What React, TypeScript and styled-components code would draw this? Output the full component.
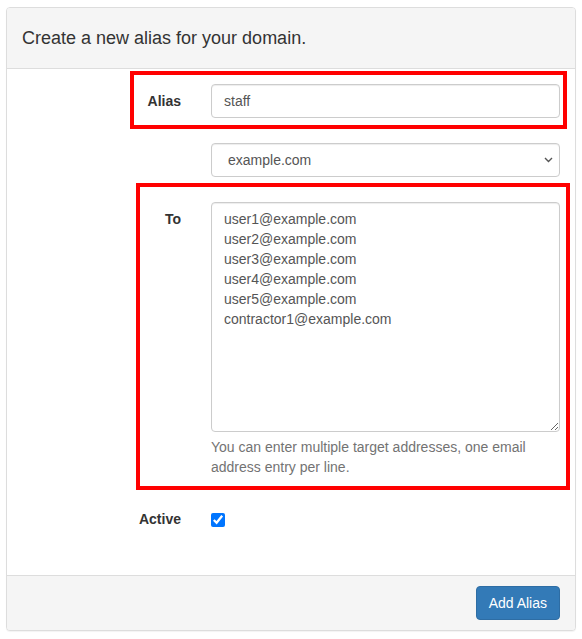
import React from "react";
import styled, { createGlobalStyle } from "styled-components";

const GlobalStyle = createGlobalStyle`
    html, body {
        margin: 0;
        padding: 0;
        background: #fff;
    }
    body {
        font-family: "Liberation Sans", Arial, Helvetica, sans-serif;
        font-size: 14px;
        line-height: 20px;
        color: #333;
    }
    * {
        box-sizing: border-box;
    }
`;

const Page = styled.div`
    padding: 7px 6px;
`;

const Panel = styled.div`
    border: 1px solid #ddd;
    border-radius: 4px;
    background: #fff;
    box-shadow: 0 1px 1px rgba(0, 0, 0, 0.05);
`;

const PanelHeading = styled.div`
    height: 61px;
    display: flex;
    align-items: center;
    padding: 0 15px;
    background: #f5f5f5;
    border-bottom: 1px solid #ddd;
    border-radius: 3px 3px 0 0;
`;

const Title = styled.h3`
    margin: 0;
    font-size: 18px;
    font-weight: 400;
    line-height: 20px;
    color: #333;
`;

const PanelBody = styled.div`
    display: flex;
    flex-direction: column;
    gap: 25px;
    padding: 15px 15px 39px;
`;

const FormGroup = styled.div`
    position: relative;
    display: grid;
    grid-template-columns: 159px 1fr;
    column-gap: 30px;
    align-items: start;
`;

const Label = styled.label`
    padding-top: 7px;
    text-align: right;
    font-weight: 700;
    line-height: 20px;
    color: #333;
`;

const Field = styled.div`
    position: relative;
    display: flex;
    flex-direction: column;
    min-width: 0;
`;

const TextInput = styled.input`
    width: 100%;
    height: 34px;
    padding: 6px 12px;
    font: inherit;
    color: #555;
    background: #fff;
    border: 1px solid #ccc;
    border-radius: 4px;
    box-shadow: inset 0 1px 1px rgba(0, 0, 0, 0.075);
    outline: none;
`;

const Select = styled.select`
    width: 100%;
    height: 34px;
    padding: 6px 12px 6px 16px;
    font: inherit;
    color: #555;
    background: #fff;
    border: 1px solid #ccc;
    border-radius: 4px;
    box-shadow: inset 0 1px 1px rgba(0, 0, 0, 0.075);
    outline: none;
    appearance: none;
    -webkit-appearance: none;
`;

const Chevron = styled.svg`
    position: absolute;
    top: 14px;
    right: 7px;
    width: 9px;
    height: 6px;
    pointer-events: none;
`;

const TextArea = styled.textarea`
    width: 100%;
    height: 230px;
    padding: 6px 12px;
    font: inherit;
    line-height: 20px;
    color: #555;
    background: #fff;
    border: 1px solid #ccc;
    border-radius: 4px;
    box-shadow: inset 0 1px 1px rgba(0, 0, 0, 0.075);
    outline: none;
    display: block;
`;

const HelpBlock = styled.span`
    display: block;
    margin-top: 5px;
    color: #737373;
    line-height: 20px;
`;

const CheckWrap = styled.div`
    padding-top: 11px;
    height: 34px;
`;

const Checkbox = styled.input`
    width: 14px;
    height: 14px;
    margin: 0;
    display: block;
    accent-color: #0075ff;
`;

const Highlight = styled.div<{ $top: number; $right: number; $bottom: number; $left: number }>`
    position: absolute;
    top: ${ p => p.$top }px;
    right: ${ p => p.$right }px;
    bottom: ${ p => p.$bottom }px;
    left: ${ p => p.$left }px;
    border: 4px solid #ff0000;
    pointer-events: none;
`;

const PanelFooter = styled.div`
    display: flex;
    justify-content: flex-end;
    padding: 10px 15px;
    background: #f5f5f5;
    border-top: 1px solid #ddd;
    border-radius: 0 0 3px 3px;
`;

const Button = styled.button`
    height: 34px;
    padding: 6px 12px;
    font: inherit;
    line-height: 20px;
    color: #fff;
    background: #337ab7;
    border: 1px solid #2e6da4;
    border-radius: 4px;
    cursor: pointer;
`;

const targets = [
    "user1@example.com",
    "user2@example.com",
    "user3@example.com",
    "user4@example.com",
    "user5@example.com",
    "contractor1@example.com",
];

const App: React.FC = () => {
    return <Page>
        <GlobalStyle/>
        <Panel>
            <PanelHeading>
                <Title>Create a new alias for your domain.</Title>
            </PanelHeading>
            <PanelBody>
                <FormGroup>
                    <Label htmlFor="alias">Alias</Label>
                    <Field>
                        <TextInput id="alias" type="text" defaultValue="staff"/>
                    </Field>
                    <Highlight $top={ -13 } $right={ -7 } $bottom={ -11 } $left={ 108 }/>
                </FormGroup>
                <FormGroup>
                    <span/>
                    <Field>
                        <Select defaultValue="example.com">
                            <option value="example.com">example.com</option>
                        </Select>
                        <Chevron viewBox="0 0 9 6">
                            <path d="M1 1 L4.5 4.5 L8 1" fill="none" stroke="#555" strokeWidth="1.4"/>
                        </Chevron>
                    </Field>
                </FormGroup>
                <FormGroup>
                    <Label htmlFor="to">To</Label>
                    <Field>
                        <TextArea id="to" defaultValue={ targets.join("\n") }/>
                        <HelpBlock>You can enter multiple target addresses, one email address entry per line.</HelpBlock>
                    </Field>
                    <Highlight $top={ -19 } $right={ -10 } $bottom={ -13 } $left={ 114 }/>
                </FormGroup>
                <FormGroup>
                    <Label htmlFor="active">Active</Label>
                    <CheckWrap>
                        <Checkbox id="active" type="checkbox" defaultChecked/>
                    </CheckWrap>
                </FormGroup>
            </PanelBody>
            <PanelFooter>
                <Button type="button">Add Alias</Button>
            </PanelFooter>
        </Panel>
    </Page>
}

export default App;
